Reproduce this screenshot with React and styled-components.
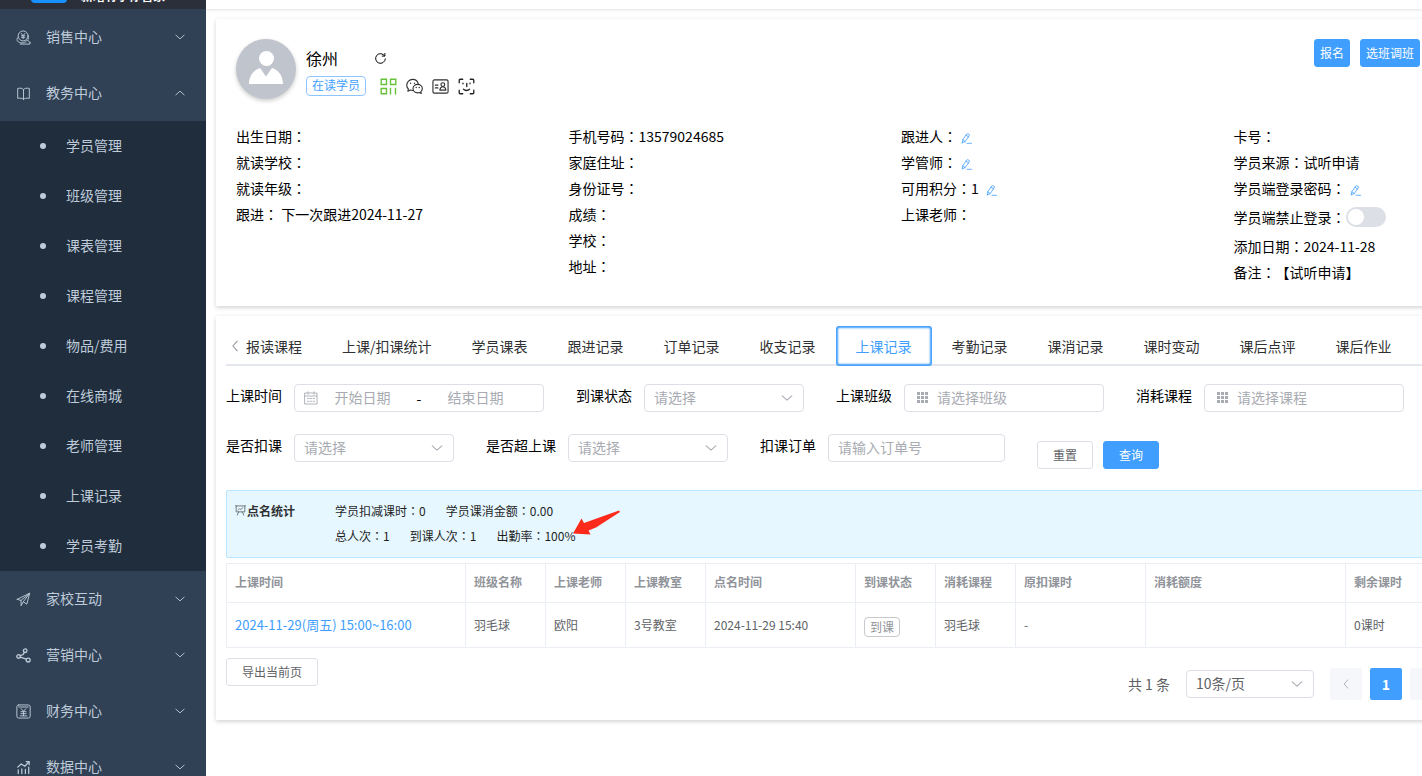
import React, { useState } from 'react';
import styled, { createGlobalStyle, css } from 'styled-components';

const cjk = '"Noto Sans CJK SC", sans-serif';
const blue = '#409eff';
const line = '#ebeef5';

const GlobalStyle = createGlobalStyle`
  * { box-sizing: border-box; }
  html, body { margin: 0; padding: 0; }
  body {
    background: #fff;
    color: #000;
    font-family: ${cjk};
    font-size: 14px;
    overflow: hidden;
  }
  button, input, select { font-family: inherit; margin: 0; }
  ul { margin: 0; padding: 0; list-style: none; }
`;

const Layout = styled.div`
  display: flex;
  height: 100vh;
  overflow: hidden;
`;

/* sidebar */
const Sidebar = styled.aside`
  flex: 0 0 206px;
  background: #304156;
  overflow: hidden;
`;

const Brand = styled.div`
  display: flex;
  align-items: flex-end;
  gap: 14px;
  height: 9px;
  padding-left: 31px;
  background: #2b2f3a;
  overflow: hidden;
`;

const BrandLogo = styled.span`
  flex: none;
  width: 36px;
  height: 24px;
  margin-bottom: 6px;
  border-radius: 4px;
  background: #1890ff;
`;

const BrandName = styled.strong`
  margin-bottom: 5px;
  color: #fff;
  font-size: 12px;
  line-height: 16px;
  white-space: nowrap;
`;

const MenuLink = styled.a`
  display: flex;
  align-items: center;
  height: 56px;
  padding: 0 20px 0 16px;
  color: #bfcbd9;
  text-decoration: none;
  svg:last-child { margin-left: auto; }
`;

const MenuText = styled.span`
  margin-left: 15px;
  padding-bottom: 2px;
  line-height: 20px;
`;

const SubMenu = styled.ul`
  background: #1f2d3d;
`;

const SubLink = styled.a`
  display: flex;
  align-items: center;
  gap: 20px;
  height: 50px;
  padding: 0 0 2px 40px;
  color: #bfcbd9;
  text-decoration: none;
  &::before {
    content: '';
    width: 6px;
    height: 6px;
    margin-top: 2px;
    border-radius: 50%;
    background: #bfcbd9;
  }
`;

/* main area */
const Main = styled.main`
  flex: 1;
  min-width: 0;
  overflow: hidden;
`;

const TopBar = styled.div`
  height: 9px;
  margin-bottom: 10px;
  box-shadow: 0 1px 3px rgba(0, 0, 0, 0.12);
`;

const Card = styled.section`
  min-width: 1370px;
  margin: 0 10px 10px;
  background: #fff;
  box-shadow: 0 2px 4px rgba(0, 0, 0, 0.14), 0 0 6px rgba(0, 0, 0, 0.04);
`;

const ProfileCard = styled(Card)`
  padding: 20px 20px 21px;
`;

const RecordCard = styled(Card)`
  padding: 10px 10px 20px;
`;

const ProfileHead = styled.div`
  display: flex;
  align-items: flex-start;
  height: 84px;
`;

const Avatar = styled.div`
  width: 60px;
  height: 60px;
  border-radius: 50%;
  background: #c0c4cc;
  box-shadow: 0 2px 4px rgba(0, 0, 0, 0.2);
  overflow: hidden;
`;

const Identity = styled.div`
  margin: 8px 0 0 10px;
`;

const NameRow = styled.div`
  display: flex;
  align-items: center;
  gap: 36px;
  height: 22px;
  font-size: 16px;
`;

const TagRow = styled.div`
  display: flex;
  align-items: center;
  gap: 9px;
  margin-top: 7px;
`;

const StatusTag = styled.span`
  height: 20px;
  margin-right: 5px;
  padding: 0 5px;
  border: 1px solid #8cc5ff;
  border-radius: 4px;
  color: ${blue};
  font-size: 12px;
  line-height: 16px;
`;

const Actions = styled.div`
  display: flex;
  gap: 10px;
  margin-left: auto;
  padding-right: 146px;
`;

const Button = styled.button`
  height: 28px;
  padding: 0 ${(p) => p.$pad || 15}px;
  border: 1px solid #dcdfe6;
  border-radius: 3px;
  background: #fff;
  color: #606266;
  font-size: 12px;
  line-height: 18px;
  white-space: nowrap;
  ${(p) => p.$primary && css`
    border-color: ${blue};
    background: ${blue};
    color: #fff;
  `}
`;

const InfoGrid = styled.div`
  display: grid;
  grid-template-columns: repeat(4, 1fr);
`;

const InfoRow = styled.div`
  display: flex;
  align-items: center;
  height: ${(p) => (p.$tall ? 32 : 26)}px;
  white-space: pre;
`;

/* the Traditional face keeps the full-width colon centred in its cell */
const Colon = styled.span`
  font-family: "Noto Sans CJK TC", ${cjk};
`;

const EditButton = styled.button`
  display: flex;
  padding: 0;
  margin: 4px 0 0 4px;
  border: 0;
  background: none;
`;

const Switch = styled.input`
  appearance: none;
  width: 40px;
  height: 20px;
  padding: 2px;
  border-radius: 10px;
  background: #dcdfe6;
  &::before {
    content: '';
    display: block;
    width: 16px;
    height: 16px;
    border-radius: 50%;
    background: #fff;
  }
  &:checked { background: ${blue}; }
  &:checked::before { margin-left: 20px; }
`;

/* tabs */
const Tabs = styled.div`
  display: flex;
  align-items: stretch;
  height: 40px;
  box-shadow: inset 0 -2px 0 #e4e7ed;
`;

const TabArrow = styled.button`
  display: flex;
  align-items: center;
  width: 20px;
  padding: 0 0 0 2px;
  border: 0;
  background: none;
`;

const Tab = styled.button`
  padding: 0 20px;
  border: 0;
  background: none;
  color: #303133;
  font-size: 14px;
  line-height: 20px;
  white-space: nowrap;
  &:first-of-type { padding-left: 0; }
  ${(p) => p.$active && css`
    color: ${blue};
    border-radius: 3px;
    box-shadow: 0 0 2px 2px ${blue} inset;
  `}
`;

const TabList = styled.div`
  display: flex;
`;

/* filters */
const Filters = styled.div`
  padding-top: 18px;
`;

const FilterRow = styled.div`
  display: flex;
  gap: 32px;
  height: 50px;
`;

const Field = styled.label`
  display: flex;
  gap: 12px;
  line-height: 23px;
  white-space: nowrap;
`;

const Box = styled.span`
  display: flex;
  align-items: center;
  gap: ${(p) => (p.$icon ? 8 : 0)}px;
  width: ${(p) => p.$w}px;
  height: 28px;
  padding: 0 ${(p) => (p.$icon ? 12 : 9)}px;
  border: 1px solid #dcdfe6;
  border-radius: 4px;
  background: #fff;
`;

const Input = styled.input`
  flex: 1;
  min-width: 0;
  height: 24px;
  padding: 0 0 2px;
  border: 0;
  outline: 0;
  background: none;
  color: #606266;
  font-size: 14px;
  &::placeholder { color: #a8abb2; opacity: 1; }
`;

const DateInput = styled(Input)`
  flex: 0 0 89px;
  width: 89px;
  text-align: center;
`;

const RangeDash = styled.span`
  width: 24px;
  text-align: center;
`;

const Select = styled.select`
  flex: 1;
  min-width: 0;
  height: 26px;
  padding: 0 0 2px;
  border: 0;
  outline: 0;
  appearance: none;
  background: none;
  color: ${(p) => (p.$filled ? '#606266' : '#a8abb2')};
  font-size: 14px;
`;

const FilterButtons = styled.div`
  display: flex;
  gap: 10px;
  padding-top: 7px;
`;

/* statistics */
const Stats = styled.div`
  position: relative;
  display: flex;
  height: 68px;
  margin: 6px 0 5px;
  padding: 7px 8px;
  border: 1px solid #bae7ff;
  border-radius: 2px;
  background: #e6f7ff;
  color: #1f1f1f;
  font-size: 12px;
  line-height: 25px;
`;

const StatsTitle = styled.strong`
  display: flex;
  align-items: center;
  gap: 1px;
  width: 100px;
  height: 25px;
  color: #303133;
`;

const StatLine = styled.div`
  display: flex;
  gap: 20px;
`;

const Arrow = styled.svg`
  position: absolute;
  left: 345px;
  top: 18px;
`;

/* table */
const Table = styled.table`
  width: 100%;
  table-layout: fixed;
  border-collapse: collapse;
  color: #606266;
  font-size: 12px;
  line-height: 18px;
  th, td {
    padding: 0 8px;
    border: 1px solid ${line};
    text-align: left;
    white-space: nowrap;
  }
  th { height: 39px; padding-bottom: 2px; color: #909399; }
  td { height: 45px; }
`;

const TimeLink = styled.a`
  color: ${blue};
  font-size: 13px;
  text-decoration: none;
`;

const MiniTag = styled.span`
  display: block;
  width: fit-content;
  height: 20px;
  margin-top: 3px;
  padding: 0 5px;
  border: 1px solid #c8c9cc;
  border-radius: 4px;
  color: #909399;
  line-height: 17px;
`;

const Footer = styled.div`
  display: flex;
  justify-content: space-between;
  align-items: flex-start;
  padding: 10px 134px 0 0;
`;

const Pager = styled.div`
  display: flex;
  align-items: center;
  gap: 8px;
  padding-top: 10px;
  color: #606266;
`;

const PageSize = styled.span`
  margin: 0 8px;
`;

const PageButton = styled.button`
  display: flex;
  align-items: center;
  justify-content: center;
  width: 32px;
  height: 32px;
  padding: 0;
  border: 0;
  border-radius: 2px;
  background: ${(p) => (p.$active ? blue : '#f5f7fa')};
  color: #fff;
  font-size: 14px;
  font-weight: 700;
`;

/* icons */
const Svg = ({ size = 14, box = 16, color = 'currentColor', width = 1, children }) => (
  <svg width={size} height={size} viewBox={`0 0 ${box} ${box}`} fill="none" stroke={color}
    strokeWidth={width} strokeLinecap="round" strokeLinejoin="round" aria-hidden="true">
    {children}
  </svg>
);

const chevrons = {
  down: 'M2.5 5.5 8 10.5 13.5 5.5',
  up: 'M2.5 10.5 8 5.5 13.5 10.5',
  left: 'M10.5 2.5 5.5 8 10.5 13.5',
  right: 'M5.5 2.5 10.5 8 5.5 13.5',
};

const Chevron = ({ dir, size = 14, color = '#a8abb2' }) => (
  <Svg size={size} color={color} width={1.2}><path d={chevrons[dir]} /></Svg>
);

const EditIcon = () => (
  <Svg size={11} box={11} color={blue}>
    <path d="M1.3 9.7 1.8 6.8 5.6 1.2Q6.6.2 7.8 1.1 8.8 1.9 8.1 3L4.2 8.6 1.3 9.7ZM5 2.2 7.6 4M1.8 6.8 4.2 8.6M6 10.3h4.5" strokeWidth=".8" />
  </Svg>
);

const CalendarIcon = () => (
  <Svg size={14} box={14} color="#a8abb2" width={0.9}>
    <path d="M1 2h12v11H1zM1 5h12M4 .8v2.4M10 .8v2.4" />
    <path d="M3.5 7.5h1.4M6.3 7.5h1.4M9.1 7.5h1.4M3.5 10.3h1.4M6.3 10.3h1.4M9.1 10.3h1.4" />
  </Svg>
);

const GridIcon = () => (
  <svg width="12" height="12" viewBox="0 0 12 12" fill="#a8abb2" aria-hidden="true">
    {[0, 4, 8].map((y) => [0, 4, 8].map((x) => <rect key={`${x}-${y}`} x={x} y={y} width="3" height="3" />))}
  </svg>
);

const menuIcons = {
  sales: (
    <>
      <circle cx="7.6" cy="6.3" r="5.3" />
      <path d="M5.7 3.7 7.6 6l1.9-2.3M7.6 6v3.3M5.9 6.2h3.4M5.9 7.8h3.4M2.2 7.8C.6 9 .5 11.4 2.4 12.6c1.4 1 3.6 1.4 5.4 1 2-.4 3.2-1.4 4.6-3 .8 1.5 1.3 2.2 2.6 2.5M13 6.8v3M4.5 15h10.4v-1.8" />
    </>
  ),
  book: <path d="M8 3.8v10.4M8 3.8C6.8 2.3 4.6 2 1.8 2.6v10.6c2.8-.5 5-.2 6.2 1M8 3.8c1.2-1.5 3.4-1.8 6.2-1.2v10.6c-2.8-.5-5-.2-6.2 1" />,
  plane: <path d="M1.3 7.8 14.6 1.3 11.5 13 7.8 10.4 5.4 14.6V9L1.3 7.8ZM5.4 9l9.2-7.7L7.8 10.4" />,
  share: (
    <>
      <circle cx="9.8" cy="2.9" r="1.9" />
      <circle cx="2.8" cy="9" r="1.9" />
      <circle cx="13" cy="12.8" r="2.1" />
      <path d="M9 4.7 7.2 7.2 4.4 8.2M4.6 9.7l6.4 2.2" />
    </>
  ),
  money: (
    <>
      <rect x=".9" y="1" width="14.2" height="14" rx="2" />
      <path d="M3 3.2h10M5.5 5 8 7.8 10.5 5M8 7.8v4.7M5.3 8.2h5.4M5.3 10.3h5.4M4.5 12.7h7" />
    </>
  ),
  chart: <path d="M2.4 14.5v-4M6.2 14.5v-5M10 14.5V10M13.6 14.5V7.5M1.8 7.6l3.8-3.4 3.8 2.5 4.3-4.5M10.9 1.8h3.2V5" strokeWidth="1.3" />,
};

const MenuIcon = ({ name }) => (
  <Svg size={15} width={name === 'share' ? 1.4 : 1}>{menuIcons[name]}</Svg>
);

const AvatarFigure = () => (
  <svg width="60" height="60" viewBox="0 0 60 60" fill="#fff" aria-hidden="true">
    <circle cx="30.5" cy="19.5" r="7.5" />
    <path d="M13 45c0-7 3.5-13.5 11-16l6 8.5 6-8.5c7.5 2.5 11 9 11 16z" />
  </svg>
);

const RefreshIcon = () => (
  <Svg size={13}>
    <path d="M13 4.6A6 6 0 1 0 14 8.5M13.4 1.8v3.2h-3.2" strokeWidth="1.2" />
  </Svg>
);

const QrIcon = () => (
  <Svg size={17} box={17} color="#67c23a" width={1.4}>
    <path d="M1.2 1.2h5.3v5.3H1.2zM10.5 1.2h5.3v5.3h-5.3zM1.2 10.5h5.3v5.3H1.2zM10.500 9.800v6.700M15.500 9.800v6.700" strokeLinecap="butt" strokeLinejoin="miter" />
  </Svg>
);

const WechatIcon = () => (
  <Svg size={17} box={18} color="#303133" width={1.2}>
    <path d="M7 13.2c-.9 0-1.7-.1-2.5-.4L2 14l.5-2.5C1.3 10.4.8 9 .8 7.6.8 4.2 3.6 1.5 7 1.5c3 0 5.4 2 6 4.7" />
    <path d="M12.3 6.8c-2.8 0-4.9 1.9-4.9 4.4s2.1 4.5 4.9 4.5c.6 0 1.2-.1 1.8-.3l2 .9-.4-1.9c1-.8 1.6-1.9 1.6-3.2 0-2.5-2.2-4.4-5-4.4z" />
    <path d="M4.8 5.5v.1M9 5.5v.1M10.8 10v.1M14 10v.1" strokeWidth="1.5" />
  </Svg>
);

const IdCardIcon = () => (
  <Svg size={17} box={18} color="#303133" width={1.2}>
    <rect x="1" y="2" width="16" height="14" rx="1.5" />
    <circle cx="11.5" cy="7" r="2" />
    <path d="M8.3 12.8c.3-2.3 1.6-3.5 3.2-3.5s2.9 1.2 3.2 3.5zM3.5 7.5h2.8M3.5 10.5h2.8" />
  </Svg>
);

const FaceIcon = () => (
  <Svg size={17} box={18} color="#202124" width={1.4}>
    <path d="M1.3 5V2.5q0-1.2 1.2-1.2H5M13 1.3h2.5q1.2 0 1.2 1.2V5M16.7 13v2.5q0 1.2-1.2 1.2H13M5 16.7H2.500q-1.200 0-1.200-1.200V13M5.300 5.500v.6M12.700 5.500v.6M9.300 5.800v3.200M5.700 11.800c1.800 1.900 4.800 1.900 6.600 0" />
  </Svg>
);

const BoardIcon = () => (
  <Svg size={11} box={12} color="#606266" width={0.9}>
    <path d="M.5 1h11M1.3 1v6.500h9.400V1M4 7.500 2.500 11M8 7.500 9.500 11M3.500 5.500 5 4l1 1 2.500-2" />
  </Svg>
);

const subMenus = ['学员管理', '班级管理', '课表管理', '课程管理', '物品/费用', '在线商城', '老师管理', '上课记录', '学员考勤'];

const menus = [
  { icon: 'sales', text: '销售中心' },
  { icon: 'book', text: '教务中心', children: subMenus },
  { icon: 'plane', text: '家校互动' },
  { icon: 'share', text: '营销中心' },
  { icon: 'money', text: '财务中心' },
  { icon: 'chart', text: '数据中心' },
];

const infoColumns = [
  [
    { label: '出生日期' },
    { label: '就读学校' },
    { label: '就读年级' },
    { label: '跟进', value: ' 下一次跟进2024-11-27' },
  ],
  [
    { label: '手机号码', value: '13579024685' },
    { label: '家庭住址' },
    { label: '身份证号' },
    { label: '成绩' },
    { label: '学校' },
    { label: '地址' },
  ],
  [
    { label: '跟进人', edit: true },
    { label: '学管师', edit: true },
    { label: '可用积分', value: '1 ', edit: true },
    { label: '上课老师' },
  ],
  [
    { label: '卡号' },
    { label: '学员来源', value: '试听申请' },
    { label: '学员端登录密码', edit: true },
    { label: '学员端禁止登录', toggle: true },
    { label: '添加日期', value: '2024-11-28' },
    { label: '备注', value: '【试听申请】' },
  ],
];

const tabs = ['报读课程', '上课/扣课统计', '学员课表', '跟进记录', '订单记录', '收支记录', '上课记录', '考勤记录', '课消记录', '课时变动', '课后点评', '课后作业'];

const columns = [
  { title: '上课时间', width: 239 },
  { title: '班级名称', width: 80 },
  { title: '上课老师', width: 80 },
  { title: '上课教室', width: 80 },
  { title: '点名时间', width: 150 },
  { title: '到课状态', width: 80 },
  { title: '消耗课程', width: 80 },
  { title: '原扣课时', width: 130 },
  { title: '消耗额度', width: 200 },
  { title: '剩余课时' },
];

const stats = [
  [['学员扣减课时', '0'], ['学员课消金额', '0.00']],
  [['总人次', '1'], ['到课人次', '1'], ['出勤率', '100%']],
];

const Info = ({ label, value, edit, toggle }) => (
  <InfoRow as={toggle ? 'label' : 'div'} $tall={toggle}>
    {label}<Colon>：</Colon>{value}
    {edit && <EditButton type="button" aria-label={label}><EditIcon /></EditButton>}
    {toggle && <Switch type="checkbox" role="switch" />}
  </InfoRow>
);

const SelectField = ({ label, width }) => (
  <Field>
    {label}
    <Box $w={width}>
      <Select><option>请选择</option></Select>
      <Chevron dir="down" />
    </Box>
  </Field>
);

const App = () => {
  const [tab, setTab] = useState('上课记录');

  return (
    <Layout>
      <GlobalStyle />
      <Sidebar>
        <Brand>
          <BrandLogo />
          <BrandName>新增有学你管家</BrandName>
        </Brand>
        <nav>
          {menus.map((menu) => (
            <div key={menu.text}>
              <MenuLink href="#">
                <MenuIcon name={menu.icon} />
                <MenuText>{menu.text}</MenuText>
                <Chevron dir={menu.children ? 'up' : 'down'} size={12} color="#bfcbd9" />
              </MenuLink>
              {menu.children && (
                <SubMenu>
                  {menu.children.map((text) => (
                    <li key={text}><SubLink href="#">{text}</SubLink></li>
                  ))}
                </SubMenu>
              )}
            </div>
          ))}
        </nav>
      </Sidebar>

      <Main>
        <TopBar />
        <ProfileCard>
          <ProfileHead>
            <Avatar><AvatarFigure /></Avatar>
            <Identity>
              <NameRow>徐州<RefreshIcon /></NameRow>
              <TagRow>
                <StatusTag>在读学员</StatusTag>
                <QrIcon />
                <WechatIcon />
                <IdCardIcon />
                <FaceIcon />
              </TagRow>
            </Identity>
            <Actions>
              <Button type="button" $primary $pad={5}>报名</Button>
              <Button type="button" $primary $pad={5}>选班调班</Button>
            </Actions>
          </ProfileHead>
          <InfoGrid>
            {infoColumns.map((rows) => (
              <div key={rows[0].label}>
                {rows.map((row) => <Info key={row.label} {...row} />)}
              </div>
            ))}
          </InfoGrid>
        </ProfileCard>

        <RecordCard>
          <Tabs>
            <TabArrow type="button" aria-label="向左"><Chevron dir="left" color="#909399" /></TabArrow>
            <TabList role="tablist">
              {tabs.map((name) => (
                <Tab key={name} type="button" role="tab" $active={name === tab} aria-selected={name === tab}
                  onClick={() => setTab(name)}>
                  {name}
                </Tab>
              ))}
            </TabList>
          </Tabs>

          <Filters>
            <FilterRow>
              <Field as="div">
                上课时间
                <Box $w={250}>
                  <CalendarIcon />
                  <DateInput placeholder="开始日期" aria-label="开始日期" />
                  <RangeDash>-</RangeDash>
                  <DateInput placeholder="结束日期" aria-label="结束日期" />
                </Box>
              </Field>
              <SelectField label="到课状态" width={160} />
              <Field>上课班级<Box $w={200} $icon><GridIcon /><Input placeholder="请选择班级" /></Box></Field>
              <Field>消耗课程<Box $w={200} $icon><GridIcon /><Input placeholder="请选择课程" /></Box></Field>
            </FilterRow>
            <FilterRow>
              <SelectField label="是否扣课" width={160} />
              <SelectField label="是否超上课" width={160} />
              <Field>扣课订单<Box $w={177}><Input placeholder="请输入订单号" /></Box></Field>
              <FilterButtons>
                <Button type="button">重置</Button>
                <Button type="button" $primary>查询</Button>
              </FilterButtons>
            </FilterRow>
          </Filters>

          <Stats>
            <StatsTitle><BoardIcon />点名统计</StatsTitle>
            <div>
              {stats.map((items) => (
                <StatLine key={items[0][0]}>
                  {items.map(([label, value]) => (
                    <span key={label}>{label}<Colon>：</Colon>{value}</span>
                  ))}
                </StatLine>
              ))}
            </div>
            <Arrow width="50" height="28" viewBox="0 0 50 28" fill="#fb2a1b" aria-hidden="true">
              <path d="M1 24.5 9.5 9.5 12 14 47 1.5 48 3 24 18.5 16.5 21.5 18.5 25.5Z" />
            </Arrow>
          </Stats>

          <Table>
            <colgroup>
              {columns.map((col) => <col key={col.title} width={col.width} />)}
            </colgroup>
            <thead>
              <tr>{columns.map((col) => <th key={col.title}>{col.title}</th>)}</tr>
            </thead>
            <tbody>
              <tr>
                <td><TimeLink href="#">2024-11-29(周五) 15:00~16:00</TimeLink></td>
                <td>羽毛球</td>
                <td>欧阳</td>
                <td>3号教室</td>
                <td>2024-11-29 15:40</td>
                <td><MiniTag>到课</MiniTag></td>
                <td>羽毛球</td>
                <td>-</td>
                <td />
                <td>0课时</td>
              </tr>
            </tbody>
          </Table>

          <Footer>
            <Button type="button">导出当前页</Button>
            <Pager>
              <span>共 1 条</span>
              <PageSize>
                <Box $w={128}>
                  <Select $filled aria-label="每页条数"><option>10条/页</option></Select>
                  <Chevron dir="down" />
                </Box>
              </PageSize>
              <PageButton type="button" aria-label="上一页"><Chevron dir="left" size={12} color="#a8abb2" /></PageButton>
              <PageButton type="button" $active>1</PageButton>
              <PageButton type="button" aria-label="下一页"><Chevron dir="right" size={12} color="#a8abb2" /></PageButton>
            </Pager>
          </Footer>
        </RecordCard>
      </Main>
    </Layout>
  );
};

export default App;
